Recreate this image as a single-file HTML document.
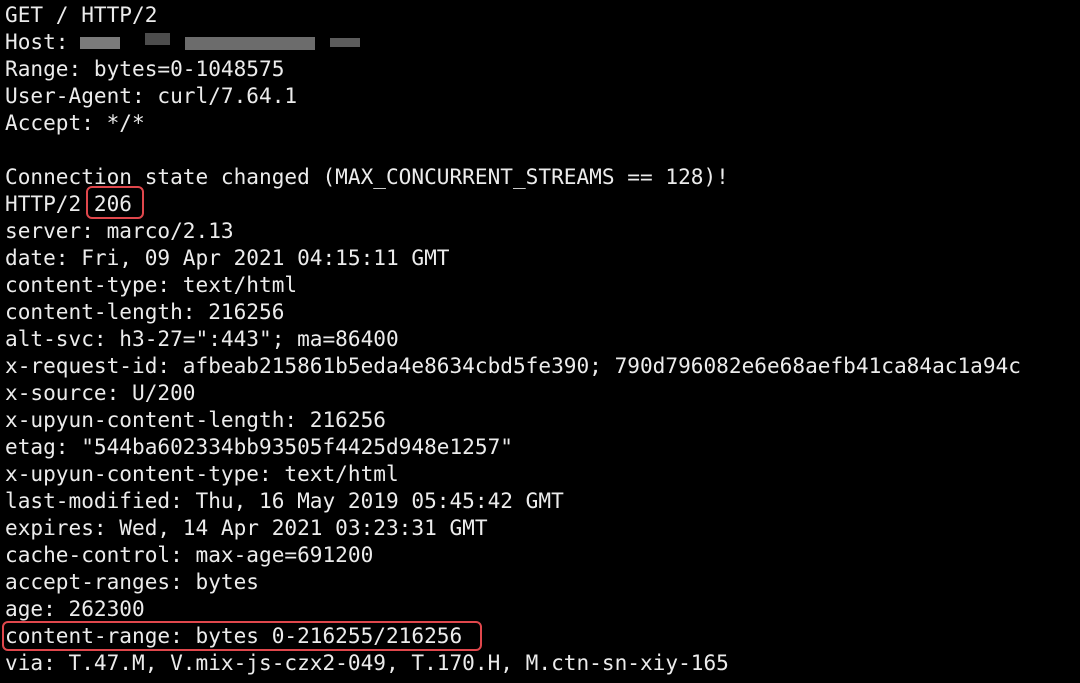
<!DOCTYPE html>
<html><head><style>
html,body{margin:0;padding:0;background:#000;}
body{width:1080px;height:683px;overflow:hidden;position:relative;}
pre{margin:0;padding:1px 0 0 5px;font-family:"DejaVu Sans Mono","Liberation Mono",monospace;font-size:21.1px;line-height:27px;color:#ececec;}
.box{position:absolute;border:2.5px solid #e0474c;border-radius:6px;}
.blur{position:absolute;background:#9a9a9a;}
</style></head><body>
<pre>GET / HTTP/2
Host:
Range: bytes=0-1048575
User-Agent: curl/7.64.1
Accept: */*

Connection state changed (MAX_CONCURRENT_STREAMS == 128)!
HTTP/2 206
server: marco/2.13
date: Fri, 09 Apr 2021 04:15:11 GMT
content-type: text/html
content-length: 216256
alt-svc: h3-27=":443"; ma=86400
x-request-id: afbeab215861b5eda4e8634cbd5fe390; 790d796082e6e68aefb41ca84ac1a94c
x-source: U/200
x-upyun-content-length: 216256
etag: "544ba602334bb93505f4425d948e1257"
x-upyun-content-type: text/html
last-modified: Thu, 16 May 2019 05:45:42 GMT
expires: Wed, 14 Apr 2021 03:23:31 GMT
cache-control: max-age=691200
accept-ranges: bytes
age: 262300
content-range: bytes 0-216255/216256
via: T.47.M, V.mix-js-czx2-049, T.170.H, M.ctn-sn-xiy-165</pre>
<div class="blur" style="left:80px;top:37px;width:40px;height:12px;opacity:.8"></div>
<div class="blur" style="left:145px;top:33px;width:25px;height:12px;opacity:.5"></div>
<div class="blur" style="left:185px;top:37px;width:130px;height:13px;opacity:.7"></div>
<div class="blur" style="left:330px;top:38px;width:30px;height:9px;opacity:.6"></div>
<div class="box" style="left:86px;top:186px;width:54px;height:29px;"></div>
<div class="box" style="left:2px;top:621px;width:476px;height:26px;"></div>
</body></html>
